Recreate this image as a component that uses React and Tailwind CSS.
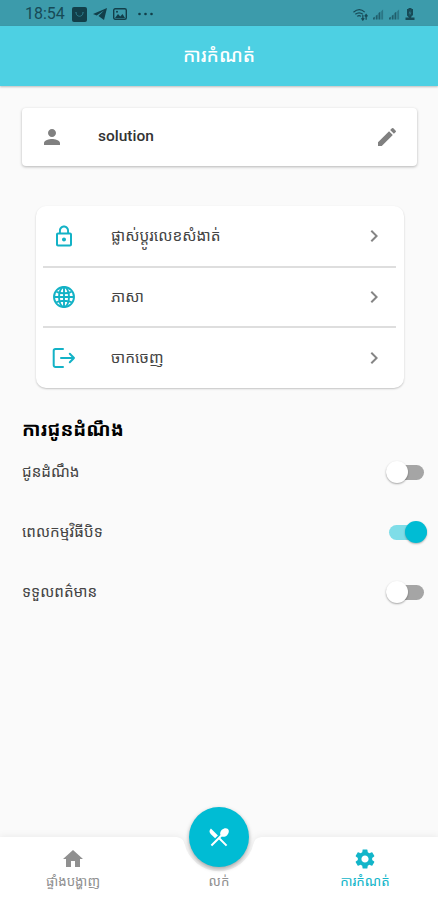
import React from 'react';
import { MdPerson, MdEdit, MdLockOutline, MdHome, MdSettings, MdChevronRight, MdRestaurantMenu } from 'react-icons/md';

const khmer = "font-['Roboto','Noto_Sans_Khmer','Khmer_OS','Noto_Sans',sans-serif]";

function Globe() {
  return (
    <svg viewBox="0 0 24 24" className="size-6" fill="none" stroke="currentColor" strokeWidth="1.900">
      <circle cx="12" cy="12" r="10" />
      <ellipse cx="12" cy="12" rx="5" ry="10" />
      <path d="M12 2v20M2 12h20M4.500 6.800c4.500 1.800 10.500 1.800 15 0M4.500 17.200c4.500-1.800 10.500-1.800 15 0" />
    </svg>
  );
}

function Exit() {
  return (
    <svg viewBox="0 0 24 24" className="size-6" fill="none" stroke="currentColor" strokeWidth="2" strokeLinecap="round" strokeLinejoin="round">
      <path d="M11 3H3.500A1.800 1.800 0 0 0 1.700 4.800v14.400A1.800 1.800 0 0 0 3.500 21H11M9 12h13M17.800 7.800 22 12l-4.200 4.200" />
    </svg>
  );
}

function Signal() {
  return (
    <svg viewBox="0 0 12 12" className="h-3 w-[11px]" fill="currentColor">
      <path d="M0 12v-2l2-1v3zM3 12V8l2-1.500V12zM6 12V5l2-1.500V12z" opacity=".75" />
      <path d="M9 12V3l2-2v11z" opacity=".45" />
    </svg>
  );
}

function StatusBar() {
  return (
    <div className="flex h-[26px] items-center bg-[#3c9bab] pt-0.5 pr-[23px] pl-[25px] text-[#174a56]">
      <span className="w-[47px] text-[16px] leading-none">18:54</span>
      <svg viewBox="0 0 15 15" className="size-[15px]">
        <rect width="15" height="15" rx="2" fill="#123f4a" />
        <path d="M4 5.500c0 5 7 5 7 0M3.500 5.500h1M10.500 5.500h1" fill="none" stroke="#2b7b8a" strokeWidth="1" />
      </svg>
      <svg viewBox="0 0 14 12" className="ml-[6px] h-3 w-[14px]" fill="#123f4a">
        <path d="M14 0 0 6l3.700 1.500L11 2.500 5.500 8 11 12z" />
      </svg>
      <svg viewBox="0 0 14 12" className="ml-[6px] h-3 w-[14px]">
        <rect x=".7" y=".7" width="12.600" height="10.600" rx="1.500" fill="none" stroke="#123f4a" strokeWidth="1.400" />
        <path d="m2 10 3-4 2.300 2.500L9.500 6l2.500 4z" fill="#123f4a" />
        <circle cx="4" cy="3.700" r="1" fill="#123f4a" />
      </svg>
      <svg viewBox="0 0 16 4" className="ml-[11px] h-1 w-4" fill="#123f4a">
        <circle cx="1.500" cy="2" r="1.300" /><circle cx="7.500" cy="2" r="1.300" /><circle cx="13.500" cy="2" r="1.300" />
      </svg>
      <div className="ml-auto flex items-center gap-[5px]">
        <svg viewBox="0 0 16 13" className="h-[13px] w-[15px]" fill="none" stroke="currentColor" strokeWidth="1.300">
          <path d="M.5 4c4-3.300 8.500-3.300 12 0M2.500 6.300c2.500-2 5.500-2 8 0M4.500 8.500c1.300-1 2.700-1 4 0" />
          <path d="M10.500 7v5M9 10.500l1.500 2 1.500-2M14 12V7M12.500 8.500l1.500-2 1.500 2" />
        </svg>
        <Signal />
        <Signal />
        <svg viewBox="0 0 10 12" className="h-3 w-[10px]" fill="#174a56">
          <path d="M3.500 0h3v1H8v6.500H7L6 9.500h3.500V12h-9V9.500H4L2 7.500V1h1.500z" />
          <path d="M5.500 2 3.500 5.500h1.300L4.500 8l2-3.500H5.200z" fill="#3c9bab" opacity=".6" />
        </svg>
      </div>
    </div>
  );
}

function MenuRow({ icon, label, last }) {
  return (
    <div className={'flex items-center pr-[10px] pl-[9px] ' + (last ? 'h-[59px]' : 'h-[60.500px] border-b-2 border-[#dedede]')}>
      <span className="flex w-6 justify-center text-[#13b2c6]">{icon}</span>
      <span className="ml-[35px] text-[15.400px] leading-5 whitespace-nowrap text-[#444]">{label}</span>
      <MdChevronRight className="ml-auto size-6 text-[#858585]" />
    </div>
  );
}

function SwitchRow({ label, on }) {
  return (
    <div className="flex h-[60px] items-center justify-between pr-[11px] pl-[22px]">
      <span className="text-[15.200px] leading-5 whitespace-nowrap text-[#444]">{label}</span>
      {on ? (
        <span className="flex h-[15px] w-[38px] items-center justify-end rounded-full bg-[#7fdde8]">
          <span className="size-[22px] shrink-0 rounded-full bg-[#00bcd4] shadow-[0_1px_2px_rgba(0,0,0,0.3)]" />
        </span>
      ) : (
        <span className="mr-[3px] flex h-[15px] w-[38px] items-center rounded-full bg-[#a5a5a5]">
          <span className="size-[22px] shrink-0 rounded-full bg-white shadow-[0_1px_2px_rgba(0,0,0,0.35)]" />
        </span>
      )}
    </div>
  );
}

function NavItem({ icon, label, active }) {
  return (
    <div className={'flex w-[146px] flex-col items-center pt-[10px] ' + (active ? 'text-[#12b5c9]' : 'text-[#909090]')}>
      <span className="flex h-6">{icon}</span>
      <span className="mt-px text-[13.300px] leading-5 whitespace-nowrap">{label}</span>
    </div>
  );
}

export default function App() {
  return (
    <div className={'flex h-[900px] w-[438px] flex-col overflow-hidden bg-[#fafafa] ' + khmer}>
      <StatusBar />
      <header className="flex h-[60px] items-center justify-center bg-[#4dd0e3] text-[19px] font-medium text-white shadow-[0_1px_2px_rgba(0,0,0,0.25)]">
        <h1>ការកំណត់</h1>
      </header>
      <section className="mt-[22px] mr-[21px] ml-[22px] flex h-[58px] items-center rounded-[4px] bg-white pr-[18px] pb-px pl-[18px] shadow-[0_1px_3px_rgba(0,0,0,0.28)]">
        <MdPerson className="size-6 text-[#808080]" />
        <span className="ml-[34px] text-[15.500px] font-medium text-[#333]">solution</span>
        <MdEdit className="ml-auto size-6 text-[#808080]" />
      </section>
      <section className="mt-[40px] mr-[34px] ml-[36px] h-[182px] rounded-[10px] bg-white pt-[1px] pr-[8px] pl-[7px] shadow-[0_1px_2px_rgba(0,0,0,0.22)]">
        <MenuRow icon={<MdLockOutline className="size-[25px]" />} label="ផ្លាស់ប្ដូរលេខសំងាត់" />
        <MenuRow icon={<Globe />} label="ភាសា" />
        <MenuRow icon={<Exit />} label="ចាកចេញ" last />
      </section>
      <h2 className="mt-[29px] h-[25px] pl-[22px] text-[19px] leading-[26px] font-bold text-black">ការជូនដំណឹង</h2>
      <section>
        <SwitchRow label="ជូនដំណឹង" />
        <SwitchRow label="ពេលកម្មវិធីបិទ" on />
        <SwitchRow label="ទទួលពត៌មាន" />
      </section>
      <footer className="relative mt-auto h-[63px]">
        <svg viewBox="0 0 438 63" className="absolute inset-0 h-[63px] w-[438px] overflow-visible drop-shadow-[0_-1px_3px_rgba(0,0,0,0.06)]">
          <path d="M0 0H174C181 0 183 2 184.500 7A35.500 35.500 0 0 0 253.500 7C255 2 257 0 264 0H438V63H0Z" fill="white" />
        </svg>
        <nav className="relative flex">
          <NavItem icon={<MdHome className="size-6" />} label="ផ្ទាំងបង្ហាញ" />
          <NavItem label="លក់" />
          <NavItem icon={<MdSettings className="size-6" />} label="ការកំណត់" active />
        </nav>
        <button className="absolute -top-[30px] left-[189px] flex size-[60px] items-center justify-center rounded-full bg-[#00bcd4] text-white shadow-[0_2px_4px_rgba(0,0,0,0.35)]">
          <MdRestaurantMenu className="size-6" />
        </button>
      </footer>
    </div>
  );
}
